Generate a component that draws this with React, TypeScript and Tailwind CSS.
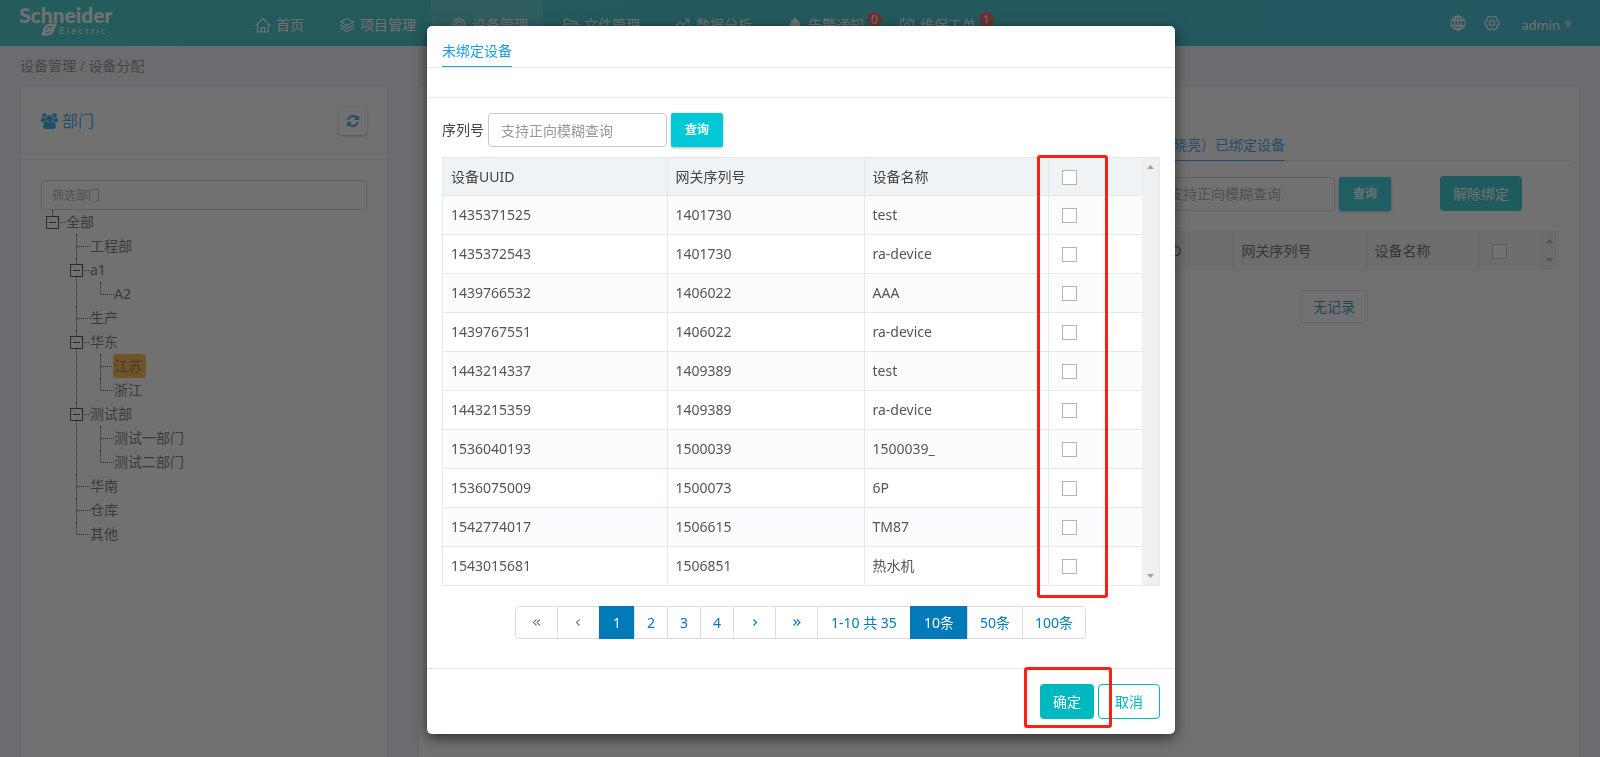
import React from "react";

const ROWS: [string, string, string][] = [
  ["1435371525", "1401730", "test"],
  ["1435372543", "1401730", "ra-device"],
  ["1439766532", "1406022", "AAA"],
  ["1439767551", "1406022", "ra-device"],
  ["1443214337", "1409389", "test"],
  ["1443215359", "1409389", "ra-device"],
  ["1536040193", "1500039", "1500039_"],
  ["1536075009", "1500073", "6P"],
  ["1542774017", "1506615", "TM87"],
  ["1543015681", "1506851", "热水机"],
];

type Node = { name: string; children?: Node[]; selected?: boolean };

const TREE: Node[] = [
  { name: "工程部" },
  { name: "a1", children: [{ name: "A2" }] },
  { name: "生产" },
  { name: "华东", children: [{ name: "江苏", selected: true }, { name: "浙江" }] },
  { name: "测试部", children: [{ name: "测试一部门" }, { name: "测试二部门" }] },
  { name: "华南" },
  { name: "仓库" },
  { name: "其他" },
];

function Stroke({ children }: { children: React.ReactNode }) {
  return (
    <svg
      width="16"
      height="16"
      viewBox="0 0 16 16"
      fill="none"
      stroke="currentColor"
      strokeWidth="1.2"
      strokeLinecap="round"
      strokeLinejoin="round"
      className="shrink-0"
      aria-hidden="true"
    >
      {children}
    </svg>
  );
}

const HomeIcon = () => (
  <Stroke>
    <path d="M.8 8.400 8 1.400l7.200 7M2.600 7v7.800h10.800V7M6.400 14.600v-4h3.200v4" />
  </Stroke>
);
const LayersIcon = () => (
  <Stroke>
    <path d="M8 1.400 14.400 5 8 8.600 1.600 5zM1.600 8 8 11.600 14.400 8M1.600 11 8 14.600 14.400 11" />
  </Stroke>
);
const SignalIcon = () => (
  <Stroke>
    <path d="M2.800 10.600a5.900 5.900 0 1 1 10.400 0M5.200 9.600a3.300 3.300 0 1 1 5.600 0M8 7.600v6.600M6.200 14.400h3.600" />
  </Stroke>
);
const FolderIcon = () => (
  <Stroke>
    <path d="M1.400 13.600V2.400h4.400l1.600 2h6.200v2.400M1.400 13.600 3.600 6.800h11.600l-2 6.800z" />
  </Stroke>
);
const TrendIcon = () => (
  <Stroke>
    <path d="M1.600 8.400 5.200 5l3 2.600 5.200-5M10.400 2h3.400v3.400M2.400 14v-2.400M6 14v-4M9.600 14v-3M13.200 14V8.400" />
  </Stroke>
);
const BellIcon = () => (
  <svg width="16" height="16" viewBox="0 0 16 16" fill="currentColor" className="shrink-0" aria-hidden="true">
    <path d="M8 .8c.7 0 1.100.4 1.100 1.100 2.300.6 3.600 2.400 3.600 4.700v3.600l1.500 1.800v.8H1.800V12l1.500-1.800V6.600c0-2.300 1.300-4.100 3.600-4.700C6.900 1.200 7.300.8 8 .8zM6.200 13.600h3.600a1.800 1.800 0 0 1-3.600 0z" />
  </svg>
);
const TicketIcon = () => (
  <Stroke>
    <path d="M3.400 3H1.600v11.400h12.800V3h-1.800M4.600 1.400v3M11.400 1.400v3M6.600 3h2.800" />
    <circle cx="8" cy="8" r="2.200" />
    <path d="M8 10.200v2" />
  </Stroke>
);

const NAV: { label: string; icon: React.ReactNode; active?: boolean; badge?: string }[] = [
  { label: "首页", icon: <HomeIcon /> },
  { label: "项目管理", icon: <LayersIcon /> },
  { label: "设备管理", icon: <SignalIcon />, active: true },
  { label: "文件管理", icon: <FolderIcon /> },
  { label: "数据分析", icon: <TrendIcon /> },
  { label: "告警通知", icon: <BellIcon />, badge: "0" },
  { label: "维保工单", icon: <TicketIcon />, badge: "1" },
];

function Logo() {
  return (
    <a href="#home" aria-label="Schneider Electric" className="ml-5 block h-[46px] w-[96px] shrink-0">
      <svg width="96" height="46" viewBox="0 0 96 46" fill="#fff">
        <text x="-1" y="23" fontFamily="Lato, sans-serif" fontWeight="900" fontSize="21">
          Schneider
        </text>
        <g fill="none" stroke="#fff" strokeWidth="2.600" strokeLinejoin="round">
          <path d="M24 31c.5-3.800 3-6.200 7.500-6.200h3.800c-.6 2-1.800 3-3.800 3.500l-4.500 1.200" />
          <path d="M34 27.500c-.8 4.200-3 7-7.500 7h-3.800c.6-2 1.800-3 3.800-3.500l4.500-1.200" />
        </g>
        <text x="39" y="34" fontFamily="Lato, sans-serif" fontSize="10" letterSpacing="2">
          Electric
        </text>
      </svg>
    </a>
  );
}

function Header() {
  return (
    <header className="flex h-[46px] items-center bg-linear-to-r from-[#10bbbb] to-[#10acc8] text-white">
      <Logo />
      <nav className="ml-[119px] flex h-full">
        {NAV.map((n) => (
          <a
            key={n.label}
            href="#nav"
            className={
              n.active
                ? "relative flex h-full items-center gap-[5px] bg-white/15 pt-[3px] pr-[15px] pl-5"
                : "relative flex h-full items-center gap-[5px] pt-[3px] pr-[15px] pl-5"
            }
          >
            {n.icon}
            <span>{n.label}</span>
            {n.badge && (
              <span className="absolute top-3 right-[-3px] flex size-[15px] items-center justify-center rounded-full bg-[#e83c3c] text-xs leading-none">
                {n.badge}
              </span>
            )}
          </a>
        ))}
      </nav>
      <div className="mr-7 ml-auto flex items-center">
        <button aria-label="语言">
          <Stroke>
            <circle cx="8" cy="8" r="7" />
            <ellipse cx="8" cy="8" rx="3.400" ry="7" />
            <path d="M8 1v14M1.600 5.400h12.800M1.600 10.600h12.800" />
          </Stroke>
        </button>
        <button aria-label="设置" className="ml-[18px]">
          <Stroke>
            <path d="M5.600 1.200 8 2.200l2.400-1 2.200 1.300.3 2.600 2 1.600v2.600l-2 1.600-.3 2.600-2.200 1.300-2.400-1-2.400 1-2.200-1.300-.3-2.600-2-1.600V6.700l2-1.600.3-2.600z" />
            <circle cx="8" cy="8" r="2.600" />
          </Stroke>
        </button>
        <button className="ml-[21px] flex items-center gap-1 pt-[3px] text-[13px]">
          admin
          <svg width="8" height="8" viewBox="0 0 8 8" fill="currentColor" className="opacity-50" aria-hidden="true">
            <path d="M0 0h8L4 8z" />
          </svg>
        </button>
      </div>
    </header>
  );
}

function Toggle() {
  return (
    <button
      aria-label="折叠"
      className="flex size-[13px] shrink-0 items-center justify-center border border-[#222] before:h-px before:w-[7px] before:bg-[#222]"
    />
  );
}

function TreeItem({ node, last }: { node: Node; last: boolean }) {
  return (
    <li className="relative">
      <span
        className={
          last
            ? "absolute top-0 left-[6px] h-3 border-l border-dotted border-[#222]"
            : "absolute top-0 bottom-0 left-[6px] border-l border-dotted border-[#222]"
        }
      />
      <div className="flex h-6 items-center">
        {node.children ? (
          <span className="relative flex w-5 items-center bg-white">
            <Toggle />
            <span className="ml-px w-[5px] border-t border-dotted border-[#222]" />
          </span>
        ) : (
          <span className="ml-[7px] w-[13px] border-t border-dotted border-[#222]" />
        )}
        <a
          href="#node"
          className={
            node.selected
              ? "-ml-px flex h-6 items-center rounded-[3px] bg-[#ffa51e] pr-1 pl-px"
              : "flex h-6 items-center"
          }
        >
          {node.name}
        </a>
      </div>
      {node.children && (
        <ul className="ml-6">
          {node.children.map((c, i) => (
            <TreeItem key={c.name} node={c} last={i === node.children!.length - 1} />
          ))}
        </ul>
      )}
    </li>
  );
}

function UsersIcon() {
  return (
    <svg width="17" height="16" viewBox="0 0 1920 1792" fill="currentColor" aria-hidden="true">
      <path d="M593 896q-162 5-265 128H194q-82 0-138-40.500T0 865q0-353 124-353 6 0 43.500 21t97.500 42.500T384 597q67 0 133-23-5 37-5 66 0 139 81 256zm1071 637q0 120-73 189.500t-194 69.500H523q-121 0-194-69.500T256 1533q0-53 3.500-103.500t14-109T300 1212t43-97.500 62-81 85.500-53.500T602 960q10 0 43 21.500t73 48 107 48 135 21.500 135-21.500 107-48 73-48 43-21.500q61 0 111.500 20t85.500 53.500 62 81 43 97.500 26.500 108.500 14 109 3.500 103.500zM640 256q0 106-75 181t-181 75-181-75-75-181 75-181T384 0t181 75 75 181zm704 384q0 159-112.500 271.500T960 1024 688.500 911.500 576 640t112.500-271.500T960 256t271.500 112.500T1344 640zm576 225q0 78-56 118.500t-138 40.500h-134q-103-123-265-128 81-117 81-256 0-29-5-66 66 23 133 23 59 0 119-21.500t97.500-42.500 43.500-21q124 0 124 353zm-128-609q0 106-75 181t-181 75-181-75-75-181 75-181 181-75 181 75 75 181z" />
    </svg>
  );
}

function RefreshIcon() {
  return (
    <svg width="12" height="14" viewBox="0 0 1536 1792" fill="currentColor" aria-hidden="true">
      <path d="M1511 1056q0 5-1 7-64 268-268 434.500T764 1664q-146 0-282.500-55T238 1452l-129 129q-19 19-45 19t-45-19-19-45v-448q0-26 19-45t45-19h448q26 0 45 19t19 45-19 45l-137 137q71 66 161 102t187 36q134 0 250-65t186-179q11-17 53-117 8-23 30-23h192q13 0 22.500 9.500t9.500 22.500zm25-800v448q0 26-19 45t-45 19h-448q-26 0-45-19t-19-45 19-45l138-138Q969 384 768 384q-134 0-250 65T332 628q-11 17-53 117-8 23-30 23H50q-13 0-22.500-9.500T18 736v-7q65-268 270-434.500T768 128q146 0 284 55.500T1297 340l130-129q19-19 45-19t45 19 19 45z" />
    </svg>
  );
}

function Departments() {
  return (
    <section className="w-[366px] shrink-0 rounded-t-[3px] bg-white shadow-sm">
      <div className="flex h-[73px] items-center justify-between border-b border-[#f0f0f0] px-5 pb-1">
        <h2 className="flex items-center gap-1 text-base text-[#0a8fdc]">
          <UsersIcon />
          部门
        </h2>
        <button
          aria-label="刷新"
          className="flex size-7 items-center justify-center rounded-[3px] bg-white text-[#0a8fdc] shadow-[0_1px_3px_rgba(0,0,0,0.4)]"
        >
          <RefreshIcon />
        </button>
      </div>
      <div className="px-5 pt-5">
        <input
          aria-label="筛选部门"
          placeholder="筛选部门"
          className="block h-[30px] w-full rounded-[3px] border border-[#c2cad8] px-[10px] text-xs placeholder:text-[#999]"
        />
        <div className="pl-[5px] text-[#555]">
          <div className="relative flex h-6 items-center">
            <span className="absolute top-0 left-[6px] h-[6px] border-l border-dotted border-[#222]" />
            <Toggle />
            <span className="mx-px w-[5px] border-t border-dotted border-[#222]" />
            <a href="#node">全部</a>
          </div>
          <ul className="ml-6">
            {TREE.map((n, i) => (
              <TreeItem key={n.name} node={n} last={i === TREE.length - 1} />
            ))}
          </ul>
        </div>
      </div>
    </section>
  );
}

function Search({ id }: { id: string }) {
  return (
    <div className="flex items-center">
      <label htmlFor={id} className="text-[#444]">
        序列号
      </label>
      <input
        id={id}
        placeholder="支持正向模糊查询"
        className="ml-1 h-[34px] w-[179px] rounded-[4px] border border-[#c2cad8] bg-transparent px-3 placeholder:text-[#999]"
      />
      <button className="ml-1 h-[34px] w-[52px] rounded-[2px] bg-[#00c8d7] text-xs font-bold text-white shadow-[0_1px_3px_rgba(0,0,0,0.3)]">
        查询
      </button>
    </div>
  );
}

function Check({ label }: { label: string }) {
  return (
    <input
      type="checkbox"
      aria-label={label}
      className="block size-[15px] appearance-none border border-[#b4b4b4] bg-white"
    />
  );
}

function Scrollbar() {
  return (
    <div className="flex w-[17px] shrink-0 flex-col items-center justify-between bg-[#f0f0f0] py-[7px] text-[#a0a0a0]">
      <svg width="7" height="4" viewBox="0 0 7 4" fill="currentColor" aria-hidden="true">
        <path d="M3.500 0 7 4H0z" />
      </svg>
      <svg width="7" height="4" viewBox="0 0 7 4" fill="currentColor" aria-hidden="true">
        <path d="M0 0h7L3.500 4z" />
      </svg>
    </div>
  );
}

function BoundDevices() {
  return (
    <section className="flex flex-1 justify-end rounded-t-[3px] bg-white pr-[5px] shadow-sm">
      <div className="w-[480px] pt-[42px]">
        <div className="border-b border-[#e5e5e5] pl-[65px]">
          <a href="#bound" className="-mb-px inline-block h-8 border-b border-[#0a8fdc] leading-8 text-[#0a8fdc]">
            （晓亮）已绑定设备
          </a>
        </div>
        <div className="flex items-center pt-[15px] pl-4">
          <Search id="bound-sn" />
          <button className="mr-[52px] ml-auto h-[35px] rounded-[4px] bg-[#00b8c0] px-[13px] text-white">解除绑定</button>
        </div>
        <div className="mx-[15px] mt-5 flex border border-[#e3e9ef]">
          <table className="flex-1 table-fixed border-collapse text-left text-[#444]">
            <thead>
              <tr className="h-[37px] bg-[#eff3f6]">
                <th className="w-[123px] px-2 pt-px font-normal">设备UUID</th>
                <th className="w-[133px] border-l border-[#e3e9ef] px-2 pt-px font-normal">网关序列号</th>
                <th className="w-[112px] border-l border-[#e3e9ef] px-2 pt-px font-normal">设备名称</th>
                <th className="border-l border-[#e3e9ef] px-[13px] pt-px font-normal">
                  <Check label="全选" />
                </th>
              </tr>
            </thead>
          </table>
          <Scrollbar />
        </div>
        <div className="mt-5 flex justify-center">
          <button className="h-[33px] rounded-[4px] border border-[#ddd] px-3 text-[#007ab8]">无记录</button>
        </div>
      </div>
    </section>
  );
}

function DeviceTable() {
  return (
    <div className="mt-[10px] flex border border-[#e3e9ef]">
      <table className="flex-1 table-fixed border-collapse text-left">
        <thead>
          <tr className="h-[37px] bg-[#eff3f6] text-[#444]">
            <th className="w-[224px] px-2 pt-[2px] font-normal">设备UUID</th>
            <th className="w-[197px] border-l border-[#e3e9ef] px-2 pt-[2px] font-normal">网关序列号</th>
            <th className="w-[184px] border-l border-[#e3e9ef] px-2 pt-[2px] font-normal">设备名称</th>
            <th className="border-l border-[#e3e9ef] px-[13px] pt-[2px] font-normal">
              <Check label="全选" />
            </th>
          </tr>
        </thead>
        <tbody className="text-[#555]">
          {ROWS.map(([uuid, sn, name]) => (
            <tr key={uuid} className="h-[39px] border-t border-[#e3e9ef] odd:bg-[#fbfcfd]">
              <td className="px-2">{uuid}</td>
              <td className="border-l border-[#e3e9ef] px-2">{sn}</td>
              <td className="border-l border-[#e3e9ef] px-2">{name}</td>
              <td className="border-l border-[#e3e9ef] px-[13px] pt-[2px]">
                <Check label={uuid} />
              </td>
            </tr>
          ))}
        </tbody>
      </table>
      <Scrollbar />
    </div>
  );
}

const CELL = "-ml-px flex h-[33px] w-[34px] items-center justify-center border border-[#ddd] text-[#007ab8]";
const CELL_WIDE = "-ml-px flex h-[33px] items-center justify-center border border-[#ddd] px-3 text-[#007ab8]";
const CELL_ACTIVE = "-ml-px flex h-[33px] items-center justify-center border border-[#007ab8] bg-[#007ab8] px-[13px] text-white";
const CELL_INFO = "-ml-px flex h-[33px] items-center justify-center border border-[#ddd] px-[13px] text-[#007ab8]";
const CELL_ARROW = "-ml-px flex h-[33px] w-[43px] items-center justify-center border border-[#ddd] text-[#007ab8]";
const CELL_ARROW_OFF = "-ml-px flex h-[33px] w-[43px] items-center justify-center border border-[#ddd] text-[#777] first:rounded-l-[4px]";

function Arrow({ double, left }: { double?: boolean; left?: boolean }) {
  const single = left ? "M5.500 1.500l-3 3 3 3" : "M3.500 1.500l3 3-3 3";
  const pair = left ? "M4.500 1.500l-3 3 3 3M8 1.500l-3 3 3 3" : "M1.500 1.500l3 3-3 3M5 1.500l3 3-3 3";
  return (
    <svg width="9" height="9" viewBox="0 0 9 9" fill="none" stroke="currentColor" strokeWidth="1.100" aria-hidden="true">
      <path d={double ? pair : single} />
    </svg>
  );
}

function Pagination() {
  return (
    <div className="mt-5 flex justify-center">
      <button aria-label="首页" className={CELL_ARROW_OFF}><Arrow double left /></button>
      <button aria-label="上一页" className={CELL_ARROW_OFF}><Arrow left /></button>
      <button className={CELL_ACTIVE}>1</button>
      <button className={CELL}>2</button>
      <button className={CELL}>3</button>
      <button className={CELL}>4</button>
      <button aria-label="下一页" className={CELL_ARROW}><Arrow /></button>
      <button aria-label="末页" className={CELL_ARROW}><Arrow double /></button>
      <span className={CELL_INFO}>1-10 共 35</span>
      <button className={CELL_ACTIVE}>10条</button>
      <button className={CELL_WIDE}>50条</button>
      <button className={`${CELL_WIDE} rounded-r-[4px]`}>100条</button>
    </div>
  );
}

function Modal() {
  return (
    <div className="fixed inset-0 flex items-start justify-center bg-[#2e2e2e]/68 pt-[26px]">
      <div
        role="dialog"
        aria-label="未绑定设备"
        className="relative mr-[-2px] w-[748px] rounded-[5px] bg-white shadow-[0_4px_14px_rgba(0,0,0,0.6)]"
      >
        <div className="h-[42px] border-b border-[#e9ecef] px-[15px]">
          <a href="#unbound" className="mt-2 inline-block h-[33px] border-b border-[#1b9be0] leading-[34px] text-[#1b9be0]">
            未绑定设备
          </a>
        </div>
        <div className="h-[30px] border-b border-[#e9ecef]" />
        <div className="px-[15px] pt-[15px] pb-[29px]">
          <Search id="unbound-sn" />
          <DeviceTable />
          <Pagination />
        </div>
        <div className="flex justify-end gap-1 border-t border-[#e5e5e5] p-[15px]">
          <button className="h-[35px] rounded-[4px] bg-[#00b8c0] px-[13px] text-white">确定</button>
          <button className="h-[35px] rounded-[4px] border border-[#00b8c0] px-4 text-[#00b8c0]">取消</button>
        </div>
        <div className="pointer-events-none absolute top-[129px] right-[67px] h-[443px] w-[71px] rounded-[3px] border-3 border-[#ff1e0f]" />
        <div className="pointer-events-none absolute right-[63px] bottom-[6px] h-[61px] w-[88px] rounded-[3px] border-3 border-[#ff1e0f]" />
      </div>
    </div>
  );
}

export default function App() {
  return (
    <div className="flex min-h-screen flex-col bg-[#edf0f7] font-['Noto_Sans','Noto_Sans_CJK_SC',sans-serif] text-sm leading-5 text-[#777]">
      <Header />
      <div className="h-[41px] px-5 pt-[10px]">设备管理 / 设备分配</div>
      <main className="flex flex-1 gap-8 px-[21px]">
        <Departments />
        <BoundDevices />
      </main>
      <Modal />
    </div>
  );
}
